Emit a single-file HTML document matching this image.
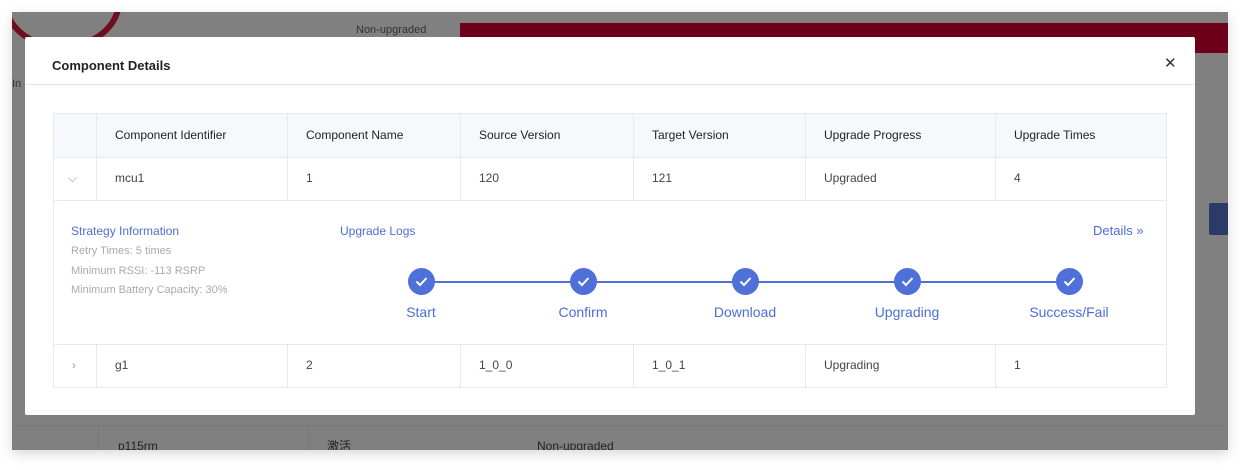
<!DOCTYPE html>
<html><head><meta charset="utf-8"><style>
*{margin:0;padding:0;box-sizing:border-box}
body{width:1248px;height:470px;background:#fff;position:relative;overflow:hidden;font-family:"Liberation Sans","Noto Sans CJK SC",sans-serif;font-size:12px;color:#333}
.bd{position:absolute;left:12px;top:12px;width:1216px;height:438px;background:#808080;overflow:hidden;box-shadow:0 4px 12px rgba(0,0,0,.15)}
.abs{position:absolute}
.modal{position:absolute;left:25px;top:37px;width:1170px;height:378px;background:#fff;border-radius:2px}
.hd{height:48px;border-bottom:1px solid #e4e4e4;padding:21px 0 0 27px;font-weight:bold;font-size:13px;color:#222}
.x{position:absolute;left:1139px;top:17px;font-size:15px;color:#333}
table{position:absolute;left:28px;top:76px;width:1114px;border-collapse:collapse}
td,th{border:1px solid #e8e8ee;text-align:left;padding:0 0 0 18px;font-weight:normal;height:43px;color:#444}
th{background:#f7f8fb;height:44px;color:#222;padding-bottom:2px}
td{padding-bottom:2px}
.blue{color:#4b6fd6}
.g{color:#aaa;font-size:11px;position:absolute;left:46px}
.c{position:absolute;width:27px;height:27px;border-radius:50%;background:#4e70d8;top:231px}
.c svg{position:absolute;left:7px;top:8px}
.l{position:absolute;top:267px;font-size:14px;color:#4b6fd6;width:120px;text-align:center}
</style></head><body>
<div class="bd">
<div class="abs" style="left:-10px;top:-60px;width:120px;height:98px;border:6px solid #6e0f20;border-radius:50%"></div>
<div class="abs" style="left:448px;top:11px;width:770px;height:30px;background:#6e0019"></div>
<div class="abs" style="left:344px;top:12px;font-size:11px;color:#333">Non-upgraded</div>
<div class="abs" style="left:0;top:66px;font-size:11px;color:#333">In</div>
<div class="abs" style="left:1197px;top:191px;width:20px;height:32px;background:#2c3a66;border-radius:2px"></div>
<div class="abs" style="left:0;top:413px;width:1216px;height:1px;background:#777"></div>
<div class="abs" style="left:86px;top:413px;width:1px;height:30px;background:#777"></div>
<div class="abs" style="left:296px;top:413px;width:1px;height:30px;background:#777"></div>
<div class="abs" style="left:106px;top:427px;font-size:12px;color:#222">p115rm</div>
<div class="abs" style="left:315px;top:425px;font-size:12px;color:#222">激活</div>
<div class="abs" style="left:525px;top:427px;font-size:12px;color:#222">Non-upgraded</div>
</div>
<div class="modal">
<div class="hd">Component Details</div>
<div class="x">✕</div>
<table>
<tr><th style="width:43px"></th><th style="width:191px">Component Identifier</th><th style="width:173px">Component Name</th><th style="width:173px">Source Version</th><th style="width:172px">Target Version</th><th style="width:190px">Upgrade Progress</th><th>Upgrade Times</th></tr>
<tr><td style="color:#999;padding-left:14px">⌵</td><td>mcu1</td><td>1</td><td>120</td><td>121</td><td>Upgraded</td><td>4</td></tr>
<tr><td colspan="7" style="height:144px"></td></tr>
<tr><td style="color:#999;padding-left:18px">›</td><td>g1</td><td>2</td><td>1_0_0</td><td>1_0_1</td><td>Upgrading</td><td>1</td></tr>
</table>
<div class="abs blue" style="left:46px;top:187px">Strategy Information</div>
<div class="g" style="top:208px">Retry Times: 5 times</div>
<div class="g" style="top:228px">Minimum RSSI: -113 RSRP</div>
<div class="g" style="top:247px">Minimum Battery Capacity: 30%</div>
<div class="abs blue" style="left:315px;top:187px">Upgrade Logs</div>
<div class="abs blue" style="left:1068px;top:186px;font-size:13px">Details »</div>
<div class="abs" style="left:396px;top:244px;width:648px;height:2px;background:#4e70d8"></div>
<div class="c" style="left:383px"><svg width="13" height="11"><path d="M1.5 5.5l3.5 3.5 6.5-7" stroke="#fff" stroke-width="2" fill="none"/></svg></div>
<div class="c" style="left:545px"><svg width="13" height="11"><path d="M1.5 5.5l3.5 3.5 6.5-7" stroke="#fff" stroke-width="2" fill="none"/></svg></div>
<div class="c" style="left:707px"><svg width="13" height="11"><path d="M1.5 5.5l3.5 3.5 6.5-7" stroke="#fff" stroke-width="2" fill="none"/></svg></div>
<div class="c" style="left:869px"><svg width="13" height="11"><path d="M1.5 5.5l3.5 3.5 6.5-7" stroke="#fff" stroke-width="2" fill="none"/></svg></div>
<div class="c" style="left:1031px"><svg width="13" height="11"><path d="M1.5 5.5l3.5 3.5 6.5-7" stroke="#fff" stroke-width="2" fill="none"/></svg></div>
<div class="l" style="left:336px">Start</div>
<div class="l" style="left:498px">Confirm</div>
<div class="l" style="left:660px">Download</div>
<div class="l" style="left:822px">Upgrading</div>
<div class="l" style="left:984px">Success/Fail</div>
</div>
</body></html>
